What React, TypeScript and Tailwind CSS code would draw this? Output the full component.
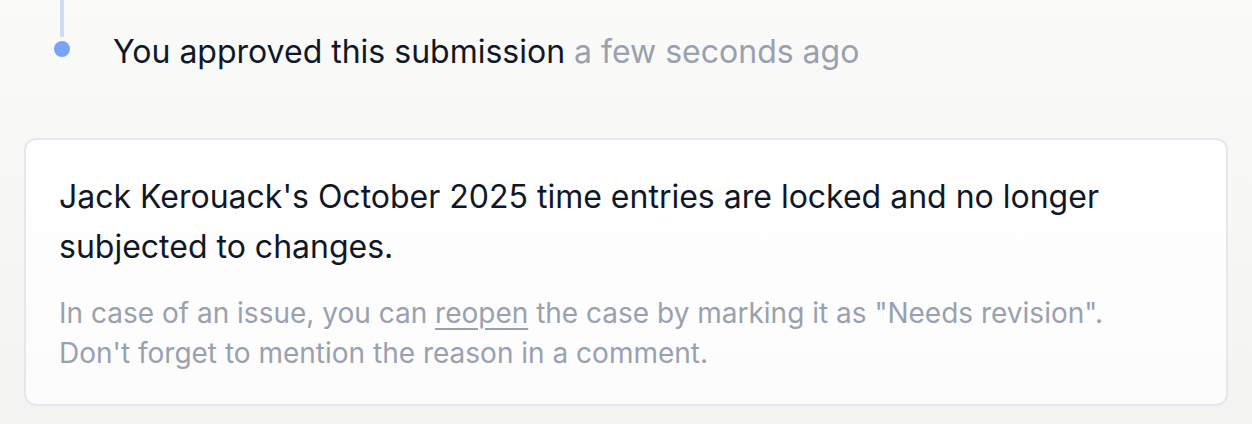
export default function App() {
  return (
    <div className="min-h-screen bg-gradient-to-b from-[#fafaf9] to-[#f3f3f2] font-['Inter',sans-serif]">
      {/* Timeline item */}
      <div className="flex">
        <div className="ml-[54px] flex w-4 flex-col items-center">
          <div className="h-[37px] w-[4px] bg-[#cfdcf6]" />
          <div className="mt-[4px] h-4 w-4 rounded-full bg-[#7aa3f7]" />
        </div>
        <div className="ml-[43px] pt-[34px] text-[32px] leading-[36px] text-[#101828]">
          You approved this submission <span className="text-[#99a1af]">a few seconds ago</span>
        </div>
      </div>

      {/* Locked notice */}
      <div className="mx-6 mt-[68px] rounded-xl border-2 border-[#e4e7ee] bg-gradient-to-b from-white to-[#fcfcfc] px-[33px] pt-[32px] pb-[31px]">
        <p className="text-[32px] leading-[50px] text-[#101828]">
          Jack Kerouack's October 2025 time entries are locked and no longer
          <br />
          subjected to changes.
        </p>
        <p className="mt-[21px] text-[28px] leading-[40px] text-[#99a1af]">
          In case of an issue, you can{' '}
          <span className="underline decoration-2 underline-offset-[5px]">reopen</span> the case by
          marking it as "Needs revision".
          <br />
          Don't forget to mention the reason in a comment.
        </p>
      </div>
    </div>
  )
}
